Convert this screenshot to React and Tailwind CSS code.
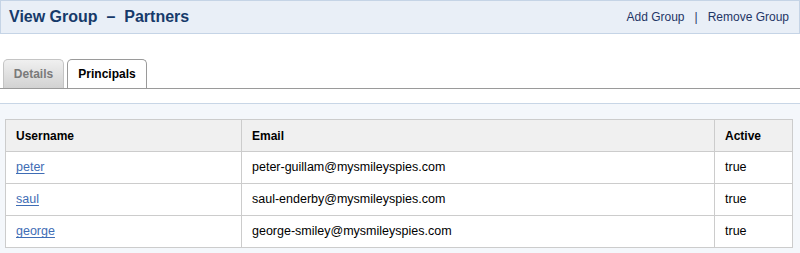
import React from 'react';

const principals = [
    {username: 'peter', email: 'peter-guillam@mysmileyspies.com', active: 'true'},
    {username: 'saul', email: 'saul-enderby@mysmileyspies.com', active: 'true'},
    {username: 'george', email: 'george-smiley@mysmileyspies.com', active: 'true'},
];

export default function App() {
    return (
        <div className="w-[800px] h-[253px] bg-white font-['Liberation_Sans',Arial,sans-serif] overflow-hidden">
            {/* Page header */}
            <div className="h-[34px] border border-[#c5d4e6] bg-[#e9eff7] flex items-center justify-between pl-2 pr-[10px]">
                <h1 className="text-[16px] font-bold text-[#163a6a] whitespace-pre">View Group  –  Partners</h1>
                <div className="text-[12px] text-[#1f3566] flex items-center">
                    <a href="#">Add Group</a>
                    <span className="mx-[10px]">|</span>
                    <a href="#">Remove Group</a>
                </div>
            </div>

            {/* Tabs */}
            <div className="mt-[25px] flex items-end gap-[3px] pl-[3px] border-b border-[#9a9a9a] h-[30px]">
                <div className="h-[29px] w-[61px] flex items-center justify-center rounded-t-[5px] border border-b-0 border-[#c4c4c4] bg-gradient-to-b from-[#f0f0f0] to-[#d2d2d2] text-[12px] font-bold text-[#7a7a7a]">
                    Details
                </div>
                <div className="h-[29px] w-[80px] flex items-center justify-center rounded-t-[5px] border border-b-0 border-[#9a9a9a] bg-white text-[12px] font-bold text-black">
                    Principals
                </div>
            </div>

            {/* Principals panel */}
            <div className="mt-[14px] border-t border-[#c8d6e6] bg-[#f4f7fb] h-full pt-[15px] pl-[5px] pr-[8px]">
                <table className="w-[788px] border-collapse bg-white text-[12.5px] text-black">
                    <thead>
                        <tr className="h-[32px] bg-[#f0f0f0]">
                            <th className="w-[236px] border border-[#cccccc] text-left font-bold pl-[10px] text-[12px]">Username</th>
                            <th className="w-[473px] border border-[#cccccc] text-left font-bold pl-[10px] text-[12px]">Email</th>
                            <th className="border border-[#cccccc] text-left font-bold pl-[10px] text-[12px]">Active</th>
                        </tr>
                    </thead>
                    <tbody>
                        {principals.map(p => (
                            <tr key={p.username} className="h-[32px]">
                                <td className="border border-[#cccccc] pl-[10px]">
                                    <a href="#" className="text-[#3f6db5] underline underline-offset-2">{p.username}</a>
                                </td>
                                <td className="border border-[#cccccc] pl-[10px]">{p.email}</td>
                                <td className="border border-[#cccccc] pl-[10px]">{p.active}</td>
                            </tr>
                        ))}
                    </tbody>
                </table>
            </div>
        </div>
    );
}
